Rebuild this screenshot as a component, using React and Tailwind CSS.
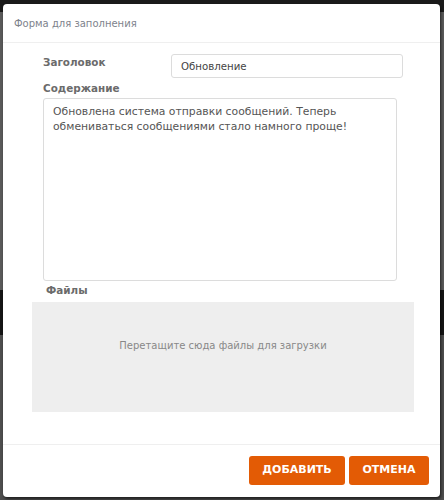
export default function App() {
  return (
    <div
      className="w-[444px] h-[500px] pt-[4px] pl-[3px] bg-[linear-gradient(to_bottom,#1a1a1a_0,#1a1a1a_12px,#5a5a5a_12px,#5a5a5a_290px,#151515_290px,#151515_335px,#4e4e4e_335px)]"
      style={{ fontFamily: '"DejaVu Sans", Verdana, sans-serif' }}
    >
      <div className="w-[437px] h-[493px] bg-white rounded-[4px] shadow-[1px_2px_3px_rgba(0,0,0,0.6)] flex flex-col">
        <div className="h-[39px] border-b border-[#efefef] flex items-center pl-[11px] pt-[1px] text-[10px] text-[#7d828c]">
          Форма для заполнения
        </div>

        <div className="flex-1">
          <div className="flex items-start mt-[11px]">
            <label className="ml-[40px] w-[128px] pt-[1px] text-[10.4px] font-bold text-[#6b6b6b]">
              Заголовок
            </label>
            <input
              type="text"
              defaultValue="Обновление"
              className="w-[232px] h-[24px] border border-[#dcdcdc] rounded-[3px] px-[9px] text-[10.2px] text-[#444] outline-none"
            />
          </div>

          <div className="ml-[40px] mt-[2px] text-[10.4px] font-bold text-[#6b6b6b] leading-[16px]">
            Содержание
          </div>
          <textarea
            defaultValue="Обновлена система отправки сообщений. Теперь обмениваться сообщениями стало намного проще!"
            className="block ml-[40px] mt-[2px] w-[354px] h-[183px] border border-[#dcdcdc] rounded-[3px] px-[9px] pt-[5px] text-[10.8px] leading-[15px] text-[#555] resize-none outline-none"
          />

          <div className="ml-[43px] mt-[1px] text-[10.4px] font-bold text-[#6b6b6b] leading-[16px]">
            Файлы
          </div>
          <div className="ml-[29px] mt-[4px] w-[382px] h-[110px] bg-[#eeeeee] flex justify-center pt-[36px] leading-[16px] text-[10px] text-[#888]">
            Перетащите сюда файлы для загрузки
          </div>
        </div>

        <div className="h-[53px] border-t border-[#efefef] flex justify-end items-start pt-[11px] pr-[11px] gap-[4px]">
          <button className="w-[96px] h-[29px] rounded-[3px] bg-[#e35b05] text-white text-[11px] font-bold">
            ДОБАВИТЬ
          </button>
          <button className="w-[80px] h-[29px] rounded-[3px] bg-[#e35b05] text-white text-[11px] font-bold">
            ОТМЕНА
          </button>
        </div>
      </div>
    </div>
  );
}
